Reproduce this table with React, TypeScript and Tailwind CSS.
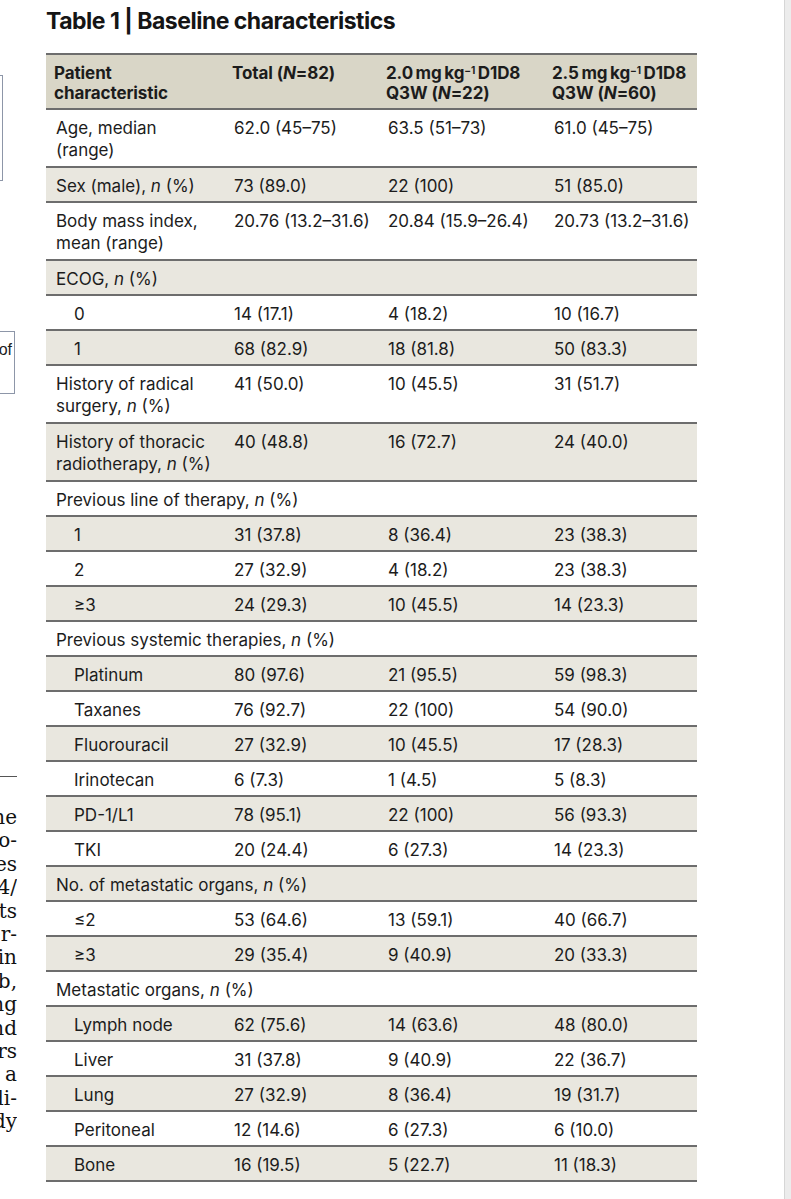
import React from "react";

type Row = {
  label: React.ReactNode;
  vals?: [string, string, string];
  indent?: boolean;
  double?: boolean;
};

const I = ({ children }: { children: React.ReactNode }) => <i>{children}</i>;

const rows: Row[] = [
  { label: <>Age, median<br />(range)</>, vals: ["62.0 (45–75)", "63.5 (51–73)", "61.0 (45–75)"], double: true },
  { label: <>Sex (male), <I>n</I> (%)</>, vals: ["73 (89.0)", "22 (100)", "51 (85.0)"] },
  { label: <>Body mass index,<br />mean (range)</>, vals: ["20.76 (13.2–31.6)", "20.84 (15.9–26.4)", "20.73 (13.2–31.6)"], double: true },
  { label: <>ECOG, <I>n</I> (%)</> },
  { label: "0", vals: ["14 (17.1)", "4 (18.2)", "10 (16.7)"], indent: true },
  { label: "1", vals: ["68 (82.9)", "18 (81.8)", "50 (83.3)"], indent: true },
  { label: <>History of radical<br />surgery, <I>n</I> (%)</>, vals: ["41 (50.0)", "10 (45.5)", "31 (51.7)"], double: true },
  { label: <>History of thoracic<br />radiotherapy, <I>n</I> (%)</>, vals: ["40 (48.8)", "16 (72.7)", "24 (40.0)"], double: true },
  { label: <>Previous line of therapy, <I>n</I> (%)</> },
  { label: "1", vals: ["31 (37.8)", "8 (36.4)", "23 (38.3)"], indent: true },
  { label: "2", vals: ["27 (32.9)", "4 (18.2)", "23 (38.3)"], indent: true },
  { label: "≥3", vals: ["24 (29.3)", "10 (45.5)", "14 (23.3)"], indent: true },
  { label: <>Previous systemic therapies, <I>n</I> (%)</> },
  { label: "Platinum", vals: ["80 (97.6)", "21 (95.5)", "59 (98.3)"], indent: true },
  { label: "Taxanes", vals: ["76 (92.7)", "22 (100)", "54 (90.0)"], indent: true },
  { label: "Fluorouracil", vals: ["27 (32.9)", "10 (45.5)", "17 (28.3)"], indent: true },
  { label: "Irinotecan", vals: ["6 (7.3)", "1 (4.5)", "5 (8.3)"], indent: true },
  { label: "PD-1/L1", vals: ["78 (95.1)", "22 (100)", "56 (93.3)"], indent: true },
  { label: "TKI", vals: ["20 (24.4)", "6 (27.3)", "14 (23.3)"], indent: true },
  { label: <>No. of metastatic organs, <I>n</I> (%)</> },
  { label: "≤2", vals: ["53 (64.6)", "13 (59.1)", "40 (66.7)"], indent: true },
  { label: "≥3", vals: ["29 (35.4)", "9 (40.9)", "20 (33.3)"], indent: true },
  { label: <>Metastatic organs, <I>n</I> (%)</> },
  { label: "Lymph node", vals: ["62 (75.6)", "14 (63.6)", "48 (80.0)"], indent: true },
  { label: "Liver", vals: ["31 (37.8)", "9 (40.9)", "22 (36.7)"], indent: true },
  { label: "Lung", vals: ["27 (32.9)", "8 (36.4)", "19 (31.7)"], indent: true },
  { label: "Peritoneal", vals: ["12 (14.6)", "6 (27.3)", "6 (10.0)"], indent: true },
  { label: "Bone", vals: ["16 (19.5)", "5 (22.7)", "11 (18.3)"], indent: true },
];

const sideText = ["the", "pro-", "tes", "4/", "nts", "er-", "in", "ab,", "ing", "and", "ers", "is a", "di-", "ody"];

export default function App() {
  return (
    <div className="w-[791px] h-[1199px] bg-white flex overflow-hidden text-[#1c1c1c]" style={{ fontFamily: "Inter, 'Noto Sans', sans-serif" }}>
      {/* left margin fragments */}
      <div className="w-[46px] shrink-0 flex flex-col">
        <div className="mt-[75px] h-[106px] w-[3px] border-y border-r border-[#8d96a8]" />
        <div className="mt-[150px] h-[63px] w-[15px] border-y border-r border-[#8d96a8] overflow-hidden flex justify-end pr-[2px] pt-[8px]">
          <span className="text-[16px] leading-[20px] whitespace-nowrap" style={{ fontFamily: "'Liberation Sans', sans-serif" }}>of</span>
        </div>
        <div className="mt-[382px] h-[1px] w-[17px] bg-[#555]" />
        <div className="mt-[29px] w-[17px] overflow-hidden flex flex-col text-[#111]" style={{ fontFamily: "'DejaVu Serif', serif" }}>
          {sideText.map((t, i) => (
            <div key={i} className="flex justify-end whitespace-nowrap text-[20px] leading-[23.4px]">{t}</div>
          ))}
        </div>
      </div>

      {/* main */}
      <div className="w-[651px] shrink-0 flex flex-col">
        <div className="mt-[6px] text-[23px] leading-[30px] font-bold tracking-[-0.5px] text-[#151515]">Table 1 | Baseline characteristics</div>
        <div className="mt-[17px] border-t-2 border-[#6d6d6d]">
          <div className="grid grid-cols-[178px_154px_166px_153px] bg-[#d9d6c7] border-b-2 border-[#6d6d6d] pt-[8px] pb-[5px] text-[17px] leading-[20px] font-bold tracking-[-0.1px]">
            <div className="pl-[8px]">Patient<br />characteristic</div>
            <div className="pl-[8px]">Total (<I>N</I>=82)</div>
            <div className="pl-[8px]">2.0&thinsp;mg&thinsp;kg<sup className="text-[10px]">−1</sup>&thinsp;D1D8<br />Q3W (<I>N</I>=22)</div>
            <div className="pl-[8px]">2.5&thinsp;mg&thinsp;kg<sup className="text-[10px]">−1</sup>&thinsp;D1D8<br />Q3W (<I>N</I>=60)</div>
          </div>
          {rows.map((r, i) => (
            <div
              key={i}
              className={`grid grid-cols-[178px_154px_166px_153px] border-b-2 border-[#6d6d6d] pt-[7px] text-[17px] leading-[22px] ${r.double ? "pb-[5px]" : "pb-[4px]"} ${i % 2 === 1 ? "bg-[#e9e7df]" : "bg-white"}`}
            >
              {r.vals ? (
                <>
                  <div className={r.indent ? "pl-[28px]" : "pl-[10px]"}>{r.label}</div>
                  <div className="pl-[10px]">{r.vals[0]}</div>
                  <div className="pl-[10px]">{r.vals[1]}</div>
                  <div className="pl-[10px]">{r.vals[2]}</div>
                </>
              ) : (
                <div className="col-span-4 pl-[10px]">{r.label}</div>
              )}
            </div>
          ))}
        </div>
      </div>

      <div className="flex-1" />
      <div className="w-[7px] shrink-0 bg-[#ececec] border-l border-[#d6d6d6]" />
    </div>
  );
}
